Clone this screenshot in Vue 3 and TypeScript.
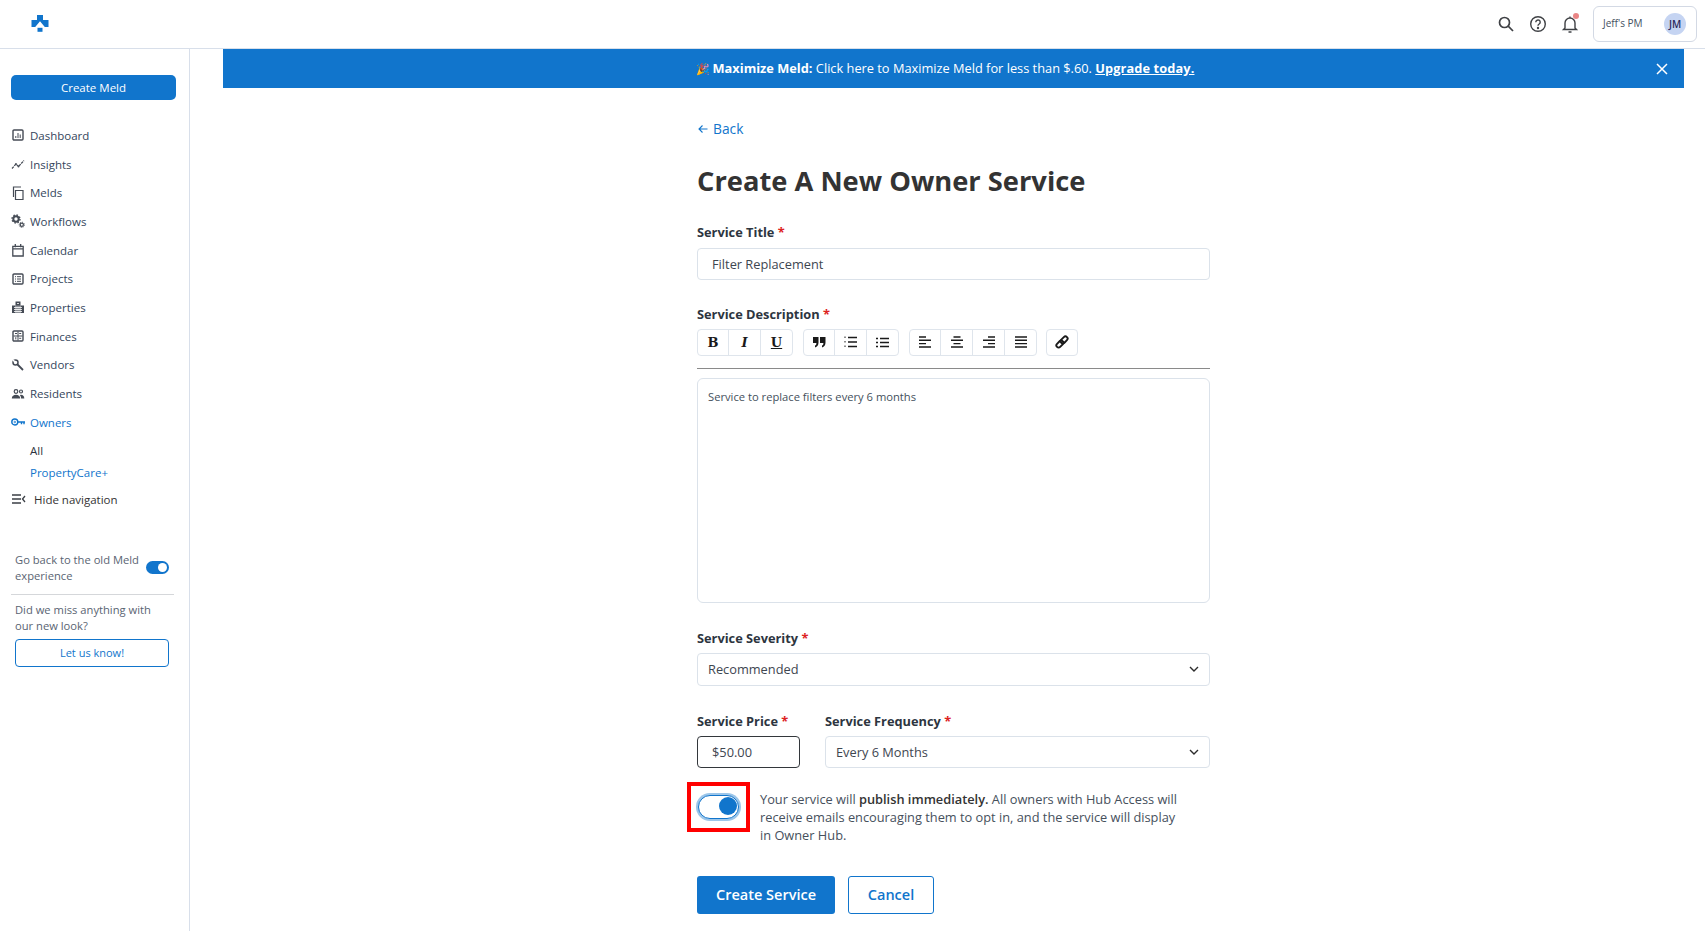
<script setup lang="ts">
interface NavItem { label: string; icon: string; active?: boolean }
const nav: NavItem[] = [
  { label: 'Dashboard', icon: 'dash' },
  { label: 'Insights', icon: 'insights' },
  { label: 'Melds', icon: 'melds' },
  { label: 'Workflows', icon: 'work' },
  { label: 'Calendar', icon: 'cal' },
  { label: 'Projects', icon: 'proj' },
  { label: 'Properties', icon: 'prop' },
  { label: 'Finances', icon: 'fin' },
  { label: 'Vendors', icon: 'vend' },
  { label: 'Residents', icon: 'res' },
  { label: 'Owners', icon: 'own', active: true },
]
</script>

<template>
  <div class="app">
    <header class="topbar">
      <svg class="logo" width="18" height="17" viewBox="0 0 18 17">
        <path fill="#1175cc" d="M6 0h6v5h5.500v7h-3.700L9 6.200 4.200 12H.5V5H6z" />
        <rect x="6.500" y="12.800" width="5" height="4" fill="#1175cc" />
      </svg>
      <div class="top-actions">
        <svg class="ti" width="18" height="18" viewBox="0 0 18 18" fill="none" stroke="#3f4145" stroke-width="1.700">
          <circle cx="7.500" cy="7.500" r="5" /><path d="M11.200 11.200 16 16" />
        </svg>
        <svg class="ti" width="18" height="18" viewBox="0 0 18 18" fill="none" stroke="#3f4145" stroke-width="1.400">
          <circle cx="9" cy="9" r="7.300" />
          <path d="M6.800 7.200a2.200 2.200 0 1 1 3.400 1.800c-.8.500-1.200 1-1.200 1.800" />
          <circle cx="9" cy="13" r=".5" fill="#3f4145" />
        </svg>
        <span class="bell">
          <svg width="18" height="20" viewBox="0 0 18 20" fill="none" stroke="#3f4145" stroke-width="1.400">
            <path d="M4 14V9a5 5 0 0 1 10 0v5l1.500 1.500h-13zM9 2.500V4M7.500 18h3" />
          </svg>
          <i class="dot"></i>
        </span>
        <div class="account">
          <span class="acc-name">Jeff's PM</span>
          <span class="avatar">JM</span>
        </div>
      </div>
    </header>

    <div class="body-row">
      <aside class="sidebar">
        <button class="create-meld">Create Meld</button>
        <nav class="nav">
          <a v-for="n in nav" :key="n.label" class="nav-item" :class="{ active: n.active }">
            <svg width="14" height="14" viewBox="0 0 14 14" fill="none" stroke="currentColor" stroke-width="1.200" class="nav-ico">
              <g v-if="n.icon === 'dash'">
                <rect x="2" y="2" width="10" height="10" rx="1" stroke-width="1.400" />
                <path stroke-width="1" d="M4.800 10V8M7 10V5M9.200 10V6.500" />
              </g>
              <g v-else-if="n.icon === 'insights'">
                <path stroke-dasharray="2.600 .8" d="M1 11.500 5 7l2.500 2.500L13 3.500" />
                <circle cx="5" cy="7" r=".9" fill="currentColor" stroke="none" />
                <circle cx="7.500" cy="9.500" r=".9" fill="currentColor" stroke="none" />
              </g>
              <path v-else-if="n.icon === 'melds'" d="M4.500 4.500h7.500v9H4.500zM2.500 11V1h7.500" />
              <g v-else-if="n.icon === 'work'">
                <circle cx="5" cy="5" r="2.700" stroke-width="2" />
                <circle cx="5" cy="5" r="4" stroke-width="1.400" stroke-dasharray="1.500 1.640" />
                <circle cx="10.800" cy="10.800" r="1.600" stroke-width="1.200" />
                <circle cx="10.800" cy="10.800" r="2.600" stroke-width="1" stroke-dasharray="1 1.040" />
              </g>
              <path v-else-if="n.icon === 'cal'" stroke-width="1.300" d="M1.800 3.300h10.400v9.700H1.800zM1.800 5.800h10.400M4.300 1v3.300M9.700 1v3.300" />
              <g v-else-if="n.icon === 'proj'">
                <rect x="2" y="2" width="10" height="10" rx="1" stroke-width="1.400" />
                <path stroke-width="1" d="M6 4.700h4M6 7h4M6 9.300h4M4 4.700h1M4 7h1M4 9.300h1" />
              </g>
              <g v-else-if="n.icon === 'prop'">
                <path fill="currentColor" stroke="none" d="M4.500 1.500h5v4h3.500v7.500H1V5.500h3.500z" />
                <path stroke="#fff" stroke-width=".8" d="M6 3.500h2M3 7.500h8M3 9.500h8M3 11.500h8M5 5.500v7.500M7 5.500v7.500M9 5.500v7.500" />
              </g>
              <g v-else-if="n.icon === 'fin'">
                <rect x="2" y="2" width="10" height="10" rx="1" stroke-width="1.400" />
                <path stroke-width="1" d="M7 2.500v9M2.500 7h9M4 4.500h2M8.200 4.500h2M4.800 8.200v2.200M8.200 9.300h2" />
              </g>
              <g v-else-if="n.icon === 'vend'">
                <path stroke-width="1.800" d="M6.500 6.500 12 12" />
                <circle cx="4.500" cy="4.500" r="2.500" stroke-width="1.500" />
                <path stroke="#fff" stroke-width="1.600" d="M2 2l2.200 2.200" />
              </g>
              <g v-else-if="n.icon === 'res'">
                <circle cx="5" cy="4.500" r="1.800" /><circle cx="10" cy="4.500" r="1.500" />
                <path fill="currentColor" stroke="none" d="M.8 11.500c0-2.500 2-3.700 4.200-3.700s4.200 1.200 4.200 3.700zM10 7.800c1.800 0 3.300 1.200 3.300 3.700h-3.200c0-1.500-.5-2.700-1.300-3.500z" />
              </g>
              <g v-else-if="n.icon === 'own'">
                <circle cx="3.800" cy="7" r="3" stroke-width="1.400" /><circle cx="3.800" cy="7" r=".8" stroke-width=".8" />
                <path stroke-width="1.400" d="M6.800 7H14M10.500 7v2.300M13 7v2.300" />
              </g>
            </svg>
            <span>{{ n.label }}</span>
          </a>
          <a class="sub-item">All</a>
          <a class="sub-item blue">PropertyCare+</a>
          <a class="hide-nav">
            <svg width="14" height="10" viewBox="0 0 14 10" fill="none" stroke="#3b3f46" stroke-width="1.300">
              <path d="M0 1h9M0 5h9M0 9h9M13 2 10.500 5 13 8" />
            </svg>
            <span>Hide navigation</span>
          </a>
        </nav>
        <div class="old-exp">
          <span>Go back to the old Meld experience</span>
          <span class="mini-toggle"><i></i></span>
        </div>
        <div class="feedback">
          <p>Did we miss anything with our new look?</p>
          <button class="letus">Let us know!</button>
        </div>
      </aside>

      <main class="main">
        <div class="banner">
          <span class="banner-text">
            <span class="party">🎉</span>
            <b>Maximize Meld:</b> Click here to Maximize Meld for less than $.60. <b class="ul">Upgrade today.</b>
          </span>
          <svg class="banner-x" width="12" height="12" viewBox="0 0 12 12" stroke="#fff" stroke-width="1.500">
            <path d="M1 1l10 10M11 1 1 11" />
          </svg>
        </div>

        <form class="form">
          <a class="back">
            <svg width="10" height="10" viewBox="0 0 10 10" fill="none" stroke="#1175cc" stroke-width="1.100">
              <path d="M9.500 5H1M4.500 1.500 1 5l3.500 3.500" />
            </svg>
            Back
          </a>
          <h1>Create A New Owner Service</h1>

          <label class="lab first">Service Title <em>*</em></label>
          <div class="field text-field">Filter Replacement</div>

          <label class="lab desc">Service Description <em>*</em></label>
          <div class="toolbar">
            <div class="tgroup">
              <span class="tb serif">B</span>
              <span class="tb serif it">I</span>
              <span class="tb serif und">U</span>
            </div>
            <div class="tgroup">
              <span class="tb">
                <svg width="13" height="11" viewBox="0 0 13 11" fill="#1a1a1a">
                  <path d="M0 0h5.500v5.500C5.500 8 4.300 10 2 10.500V8.500c1-.3 1.400-1 1.400-2.500H0zM7 0h5.500v5.500C12.500 8 11.300 10 9 10.500V8.500c1-.3 1.400-1 1.400-2.500H7z" />
                </svg>
              </span>
              <span class="tb">
                <svg width="13" height="12" viewBox="0 0 13 12" stroke="#1a1a1a" stroke-width="1.300" fill="none">
                  <path d="M4 1.500h9M4 6h9M4 10.500h9" /><path stroke-width="1" stroke-dasharray="1.500 1" d="M1 .5v2.500M1 5v2.500M1 9.500v2.500" />
                </svg>
              </span>
              <span class="tb">
                <svg width="13" height="11" viewBox="0 0 13 11" stroke="#1a1a1a" stroke-width="1.400" fill="none">
                  <path d="M4 1.500h9M4 5.500h9M4 9.500h9M0 1.500h2M0 5.500h2M0 9.500h2" />
                </svg>
              </span>
            </div>
            <div class="tgroup">
              <span class="tb">
                <svg width="12" height="12" viewBox="0 0 12 12" stroke="#1a1a1a" stroke-width="1.400"><path d="M0 1h7M0 4.300h12M0 7.600h7M0 11h12" /></svg>
              </span>
              <span class="tb">
                <svg width="12" height="12" viewBox="0 0 12 12" stroke="#1a1a1a" stroke-width="1.400"><path d="M2.500 1h7M0 4.300h12M2.500 7.600h7M0 11h12" /></svg>
              </span>
              <span class="tb">
                <svg width="12" height="12" viewBox="0 0 12 12" stroke="#1a1a1a" stroke-width="1.400"><path d="M5 1h7M0 4.300h12M5 7.600h7M0 11h12" /></svg>
              </span>
              <span class="tb">
                <svg width="12" height="12" viewBox="0 0 12 12" stroke="#1a1a1a" stroke-width="1.400"><path d="M0 1h12M0 4.300h12M0 7.600h12M0 11h12" /></svg>
              </span>
            </div>
            <div class="tgroup link-group">
              <span class="tb">
                <svg width="14" height="14" viewBox="0 0 14 14" fill="none" stroke="#1a1a1a" stroke-width="1.900">
                  <g transform="rotate(-45 7 7)">
                    <rect x="0" y="4.800" width="8" height="4.400" rx="2.200" />
                    <rect x="6" y="4.800" width="8" height="4.400" rx="2.200" />
                  </g>
                </svg>
              </span>
            </div>
          </div>
          <div class="rule"></div>
          <div class="editor">Service to replace filters every 6 months</div>

          <label class="lab sev">Service Severity <em>*</em></label>
          <div class="field select">
            <span>Recommended</span>
            <svg width="10" height="6" viewBox="0 0 10 6" fill="none" stroke="#2c2c2c" stroke-width="1.400"><path d="M1 1l4 4 4-4" /></svg>
          </div>

          <div class="price-row">
            <div class="price-col">
              <label class="lab">Service Price <em>*</em></label>
              <div class="field price">$50.00</div>
            </div>
            <div class="freq-col">
              <label class="lab">Service Frequency <em>*</em></label>
              <div class="field select freq">
                <span>Every 6 Months</span>
                <svg width="10" height="6" viewBox="0 0 10 6" fill="none" stroke="#2c2c2c" stroke-width="1.400"><path d="M1 1l4 4 4-4" /></svg>
              </div>
            </div>
          </div>

          <div class="publish">
            <div class="red-box"><span class="big-toggle"><i></i></span></div>
            <p>Your service will <b>publish immediately.</b> All owners with Hub Access will receive emails encouraging them to opt in, and the service will display in Owner Hub.</p>
          </div>

          <div class="actions">
            <button type="button" class="primary">Create Service</button>
            <button type="button" class="secondary">Cancel</button>
          </div>
        </form>
      </main>
    </div>
  </div>
</template>

<style>
html, body { margin: 0; background: #fff; overflow: hidden; }
</style>

<style scoped>
.app {
  width: 1705px; height: 931px; overflow: hidden; display: flex; flex-direction: column;
  font-family: "Open Sans", "Noto Sans", sans-serif; color: #333; background: #fff;
}
.topbar {
  height: 48px; flex: none; border-bottom: 1px solid #d8dfea; display: flex; align-items: center;
  justify-content: space-between; padding: 0 8px 0 31px;
}
.logo { margin-top: -2px; }
.top-actions { display: flex; align-items: center; margin-top: -1px; }
.ti { margin-right: 14px; }
.bell { position: relative; width: 18px; height: 20px; margin-right: 14px; }
.dot { position: absolute; right: 0; top: -1px; width: 6px; height: 6px; border-radius: 50%; background: #e98585; }
.account {
  width: 104px; height: 36px; box-sizing: border-box; border: 1px solid #d3d9e4; border-radius: 6px;
  display: flex; align-items: center; justify-content: space-between; padding: 0 10px 0 9px; font-size: 10px; color: #44515f;
}
.acc-name { margin-top: -2px; }
.avatar {
  width: 22px; height: 22px; border-radius: 50%; background: #c5d4f2; color: #2b2a5e; font-size: 10px; font-weight: 600;
  display: flex; align-items: center; justify-content: center;
}
.body-row { flex: 1; display: flex; min-height: 0; }
.sidebar { width: 190px; flex: none; box-sizing: border-box; border-right: 1px solid #d8dfea; padding: 26px 13px 0 11px; }
.create-meld {
  width: 165px; height: 25px; display: block; border: 0; border-radius: 5px; background: #1175cc; color: #fff;
  font: 400 11.500px "Open Sans", sans-serif; padding: 0;
}
.nav { display: flex; flex-direction: column; margin-top: 21px; }
.nav-item { height: 28.700px; display: flex; align-items: center; gap: 5px; font-size: 11.500px; color: #34465c; }
.nav-item.active { color: #1175cc; }
.nav-ico { flex: none; color: #454b55; }
.nav-item.active .nav-ico { color: #1175cc; }
.sub-item { padding-left: 19px; height: 22.500px; line-height: 22.500px; font-size: 11.500px; color: #2c3440; }
.sub-item.blue { color: #1175cc; }
.sub-item:not(.blue) { margin-top: 3px; }
.hide-nav { display: flex; align-items: center; gap: 8px; height: 29px; padding-left: 1px; font-size: 11.500px; color: #333; }
.old-exp {
  display: flex; align-items: center; justify-content: space-between; margin: 38px 7px 0 4px;
  font-size: 11.200px; line-height: 16px; color: #5a6472;
}
.old-exp span:first-child { width: 128px; }
.mini-toggle { width: 23px; height: 13px; background: #1175cc; border-radius: 7px; position: relative; flex: none; }
.mini-toggle i { position: absolute; right: 2px; top: 2px; width: 9px; height: 9px; border-radius: 50%; background: #fff; }
.feedback { margin: 10px 2px 0 0; border-top: 1px solid #d5d7da; padding: 7px 0 0 4px; font-size: 11.200px; line-height: 16px; color: #5a6472; }
.feedback p { margin: 0 0 5px; width: 145px; }
.letus {
  width: 154px; height: 28px; border: 1px solid #1175cc; border-radius: 4px; background: #fff; color: #1175cc;
  font: 400 11px "Open Sans", sans-serif; padding: 0;
}
.main { flex: 1; min-width: 0; padding-left: 33px; padding-right: 21px; }
.banner {
  height: 39px; background: #1175cc; color: #fff; display: flex; align-items: center; justify-content: center;
  position: relative; font-size: 12.800px; padding-right: 17px;
}
.banner-text { margin-top: -1px; }
.party { font-size: 11px; margin-right: 3px; }
.ul { text-decoration: underline; letter-spacing: .1px; }
.banner-x { position: absolute; right: 16px; top: 14px; }
.form { width: 513px; margin-left: 474px; display: flex; flex-direction: column; }
.back { margin-top: 30.500px; height: 20px; display: flex; align-items: center; gap: 5px; font-size: 13.800px; color: #1175cc; padding-left: 1px; }
h1 { margin: 23.500px 0 0; font-size: 27.300px; line-height: 38px; font-weight: 700; color: #333; }
.lab { font-size: 12.800px; line-height: 18px; font-weight: 700; color: #2d3540; display: block; }
.lab em { color: #d22; font-style: normal; }
.lab.first { margin-top: 22.500px; }
.field {
  box-sizing: border-box; border: 1px solid #dbe2ea; border-radius: 4px; font-size: 12.800px; color: #3e4650;
  display: flex; align-items: center;
}
.text-field { height: 32px; margin-top: 7px; padding-left: 14px; }
.lab.desc { margin-top: 25px; }
.toolbar { display: flex; gap: 10px; margin-top: 6px; }
.tgroup { display: flex; border: 1px solid #dfe5ec; border-radius: 4px; height: 27px; box-sizing: border-box; }
.link-group { margin-left: -1px; }
.tb { width: 31px; display: flex; align-items: center; justify-content: center; border-left: 1px solid #dfe5ec; color: #1a1a1a; }
.tb:first-child { border-left: 0; width: 30px; }
.serif { font: 700 13px "DejaVu Serif", serif; }
.it { font-style: italic; }
.und { text-decoration: underline; }
.rule { height: 1px; background: #8a8a8a; margin-top: 12px; }
.editor {
  height: 225.500px; box-sizing: border-box; margin-top: 9px; border: 1px solid #dbe2ea; border-radius: 6px;
  padding: 10px 10px; font-size: 11.200px; line-height: 16px; color: #44505c;
}
.lab.sev { margin-top: 25.500px; }
.select { justify-content: space-between; padding: 0 10px 0 10px; }
.field.select { height: 33px; margin-top: 6px; }
.price-row { display: flex; gap: 25px; margin-top: 26.500px; }
.price-col { width: 103px; flex: none; }
.freq-col { flex: 1; }
.field.price { height: 32px; margin-top: 5.500px; border-color: #33373b; padding-left: 14px; }
.field.select.freq { margin-top: 5.500px; height: 32px; }
.publish { display: flex; align-items: flex-start; margin-top: 14px; margin-left: -10px; }
.red-box {
  width: 63px; height: 50px; box-sizing: border-box; border: 4px solid #f00; flex: none; display: flex;
  align-items: center; justify-content: center;
}
.big-toggle {
  width: 41px; height: 24px; box-sizing: border-box; border: 1.500px solid #1175cc; border-radius: 12px; background: #fff;
  box-shadow: 0 0 0 2px #9cc6ea; position: relative;
}
.big-toggle i { position: absolute; right: 1.500px; top: 1.500px; width: 18px; height: 18px; border-radius: 50%; background: #1175cc; }
.publish p { margin: 8px 0 0 10px; width: 425px; font-size: 12.800px; line-height: 18px; color: #46505c; }
.publish b { font-weight: 600; color: #333; }
.actions { display: flex; gap: 13px; margin-top: 32px; }
.actions button { height: 38px; border-radius: 3px; font: 600 14.500px "Open Sans", sans-serif; padding: 0; }
.primary { width: 138px; background: #1175cc; border: 0; color: #fff; }
.secondary { width: 86px; background: #fff; border: 1px solid #1175cc; color: #1175cc; }
</style>
